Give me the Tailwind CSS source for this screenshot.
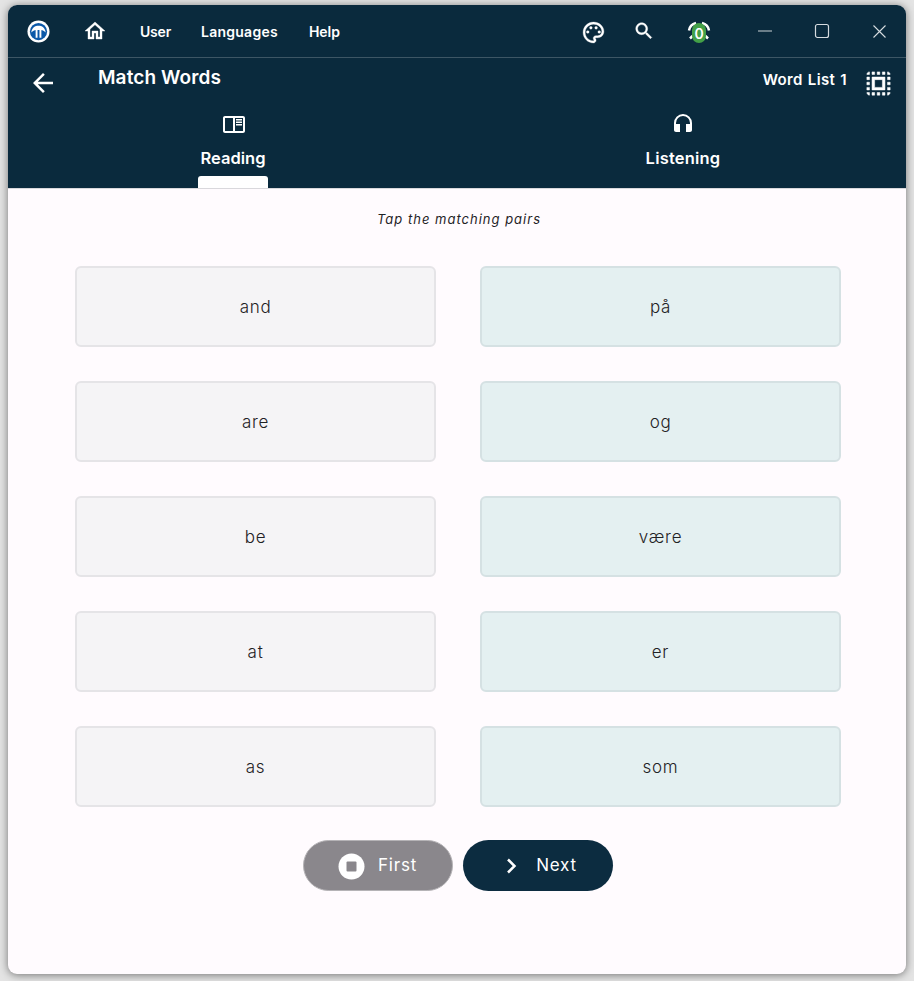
<!DOCTYPE html>
<html lang="en">
<head>
  <meta charset="UTF-8">
  <title>Match Words</title>
  <script src="https://cdn.jsdelivr.net/npm/@tailwindcss/browser@4"></script>
</head>
<body class="bg-[#e4e4e4] h-[981px] w-[914px] overflow-hidden font-['Inter','Liberation_Sans',sans-serif]">
  <div class="ml-[8px] mt-[5px] w-[898px] h-[969px] rounded-[9px] overflow-hidden flex flex-col bg-[#fffbfe] shadow-[0_1px_9px_rgba(0,0,0,0.5)]">

    <!-- title bar -->
    <div class="h-[53px] shrink-0 bg-[#0a2a3d] border-b border-[#3d5665] flex items-center text-white relative">
      <svg class="ml-[19px] w-[23px] h-[23px]" viewBox="0 0 24 24">
        <circle cx="12" cy="12" r="11.5" fill="#fff"/>
        <circle cx="12" cy="12" r="9" fill="#0b58a8"/>
        <path d="M4.500 13C5 8 8.500 6 12 6s7 2 7.500 7C17 10.500 15 10.500 12 10.500S7 10.500 4.500 13z" fill="#fff"/>
        <path d="M9 10.500h2v8H9zM13 10.500h2v8h-2z" fill="#fff"/>
      </svg>
      <svg class="ml-[33px] w-[24px] h-[24px]" viewBox="0 0 24 24" fill="#fff" stroke="#fff" stroke-width="0.4"><path d="M12 5.690l5 4.500V18h-2v-6H9v6H7v-7.810l5-4.500M12 3L2 12h3v8h6v-6h2v6h6v-8h3L12 3z"/></svg>
      <span class="ml-[33px] w-[30px] text-[14px] font-semibold tracking-[-0.2px]">User</span>
      <span class="ml-[31px] text-[14px] font-semibold tracking-[0.25px]">Languages</span>
      <span class="ml-[31px] text-[14px] font-semibold">Help</span>

      <svg class="absolute left-[573px] top-[15px] w-[25px] h-[25px]" viewBox="0 0 24 24" fill="#fff" stroke="#fff" stroke-width="0.3">
        <path d="M12 22C6.490 22 2 17.510 2 12S6.490 2 12 2s10 4.040 10 9c0 3.310-2.690 6-6 6h-1.770c-.28 0-.5.220-.5.500 0 .12.050.23.130.33.410.47.640 1.060.640 1.670 0 1.380-1.120 2.500-2.500 2.500zm0-18c-4.410 0-8 3.590-8 8s3.590 8 8 8c.28 0 .5-.22.5-.5 0-.16-.08-.28-.14-.35-.41-.46-.63-1.050-.63-1.650 0-1.380 1.120-2.500 2.500-2.500H16c2.210 0 4-1.790 4-4 0-3.860-3.590-7-8-7z"/>
        <circle cx="6.500" cy="11.500" r="1.300"/><circle cx="9.500" cy="7.500" r="1.300"/><circle cx="14.500" cy="7.500" r="1.300"/><circle cx="17.500" cy="11.500" r="1.300"/>
      </svg>
      <svg class="absolute left-[625px] top-[15px] w-[22px] h-[22px]" viewBox="0 0 24 24" fill="#fff" stroke="#fff" stroke-width="0.4"><path d="M15.500 14h-.79l-.28-.27C15.410 12.590 16 11.110 16 9.500 16 5.910 13.090 3 9.500 3S3 5.910 3 9.500 5.910 16 9.500 16c1.610 0 3.090-.59 4.230-1.570l.27.28v.79l5 4.990L20.490 19l-4.990-5zm-6 0C7.010 14 5 11.990 5 9.500S7.010 5 9.500 5 14 7.010 14 9.500 11.990 14 9.500 14z"/></svg>
      <div class="absolute left-[679px] top-[16px] w-[24px] h-[24px]">
        <svg class="w-[24px] h-[24px]" viewBox="0 0 24 24" fill="none" stroke="#fff" stroke-width="2.500"><path d="M2 9.500C2.500 6 5 3 9 2M22 9.500C21.500 6 19 3 15 2M3 17.500l2.500-2.500M21 17.500L18.500 15"/></svg>
        <span class="absolute left-[5px] top-[2px] w-[14px] h-[20px] rounded-full bg-[#43a047] flex items-center justify-center text-[14px] font-semibold">0</span>
      </div>

      <svg class="absolute left-[749px] top-[16px] w-[16px] h-[20px]" viewBox="0 0 16 20"><path d="M1 10h14" stroke="#c9d1d6" stroke-width="1.200"/></svg>
      <svg class="absolute left-[806px] top-[18px] w-[16px] h-[16px]" viewBox="0 0 16 16" fill="none"><rect x="1.500" y="1.500" width="13" height="13" rx="2" stroke="#d5dbdf" stroke-width="1.200"/></svg>
      <svg class="absolute left-[864px] top-[19px] w-[15px] h-[15px]" viewBox="0 0 15 15" fill="none"><path d="M1.500 1.500l12 12M13.500 1.500l-12 12" stroke="#d5dbdf" stroke-width="1.100"/></svg>
    </div>

    <!-- app bar with tabs -->
    <div class="h-[130px] shrink-0 bg-[#0a2a3d] text-white flex flex-col relative">
      <div class="h-[52px] flex items-start relative">
        <svg class="ml-[20px] mt-[10px] w-[30px] h-[30px]" viewBox="0 0 24 24" fill="#fff"><path d="M20 11H7.830l5.590-5.590L12 4l-8 8 8 8 1.410-1.410L7.830 13H20v-2z"/></svg>
        <span class="ml-[40px] mt-[7px] text-[19px] font-semibold leading-[25px] tracking-[0.1px]">Match Words</span>
        <span class="ml-auto mt-[12px] text-[15px] font-semibold leading-[20px] tracking-[0.35px] [word-spacing:1px]">Word List 1</span>
        <svg class="ml-[16px] mr-[12px] mt-[10px] w-[31px] h-[31px]" viewBox="0 0 24 24" fill="#fff" stroke="#fff" stroke-width="0.4"><path d="M3 5h2V3c-1.100 0-2 .9-2 2zm0 8h2v-2H3v2zm4 8h2v-2H7v2zM3 9h2V7H3v2zm10-6h-2v2h2V3zm6 0v2h2c0-1.100-.9-2-2-2zM5 21v-2H3c0 1.100.9 2 2 2zm-2-4h2v-2H3v2zM9 3H7v2h2V3zm2 18h2v-2h-2v2zm8-8h2v-2h-2v2zm0 8c1.100 0 2-.9 2-2h-2v2zm0-12h2V7h-2v2zm0 8h2v-2h-2v2zm-4 4h2v-2h-2v2zm0-16h2V3h-2v2zM7 17h10V7H7v10zm2-8h6v6H9V9z"/></svg>
      </div>
      <div class="grid grid-cols-2 flex-1">
        <div class="relative flex flex-col items-center">
          <svg class="w-[24px] h-[24px] mt-[2px] ml-[2px]" viewBox="0 0 24 24" fill="#fff"><path d="M21 4H3c-1.100 0-2 .9-2 2v13c0 1.100.9 2 2 2h18c1.100 0 2-.9 2-2V6c0-1.100-.9-2-2-2zM3 19V6h8v13H3zm18 0h-8V6h8v13zm-7-9.500h6V11h-6zm0-2.500h6v1.500h-6zm0 5h6v1.500h-6z"/></svg>
          <span class="mt-[11px] ml-[1px] text-[16.500px] font-semibold leading-[22px]">Reading</span>
          <span class="absolute bottom-0 left-[190px] w-[70px] h-[12px] bg-white rounded-t-[3px]"></span>
        </div>
        <div class="flex flex-col items-center">
          <svg class="w-[24px] h-[24px] mt-[1px] ml-[3px]" viewBox="0 0 24 24" fill="#fff"><path d="M12 3a9 9 0 0 0-9 9v7c0 1.100.9 2 2 2h4v-8H5v-1a7 7 0 0 1 14 0v1h-4v8h4c1.100 0 2-.9 2-2v-7a9 9 0 0 0-9-9z"/></svg>
          <span class="mt-[12px] ml-[3px] text-[16.500px] font-semibold leading-[22px] tracking-[0.2px]">Listening</span>
        </div>
      </div>
    </div>

    <!-- exercise -->
    <div class="flex-1 flex flex-col items-center border-t border-[#d9d8dc]">
      <p class="mt-[21px] ml-[4px] text-[13px] italic leading-[18px] tracking-[1px] text-[#1f2326]">Tap the matching pairs</p>
      <div class="mt-[38px] ml-[2px] grid grid-cols-[361px_361px] auto-rows-[81px] gap-x-[44px] gap-y-[34px] text-[17px] font-light tracking-[0.7px] text-[#1f2225]">
        <div class="pt-[2px] rounded-[6px] border-2 border-[#e5e4e7] bg-[#f5f4f6] flex items-center justify-center">and</div>
        <div class="pt-[2px] rounded-[6px] border-2 border-[#d5e1e3] bg-[#e4f0f1] flex items-center justify-center">på</div>
        <div class="pt-[2px] rounded-[6px] border-2 border-[#e5e4e7] bg-[#f5f4f6] flex items-center justify-center">are</div>
        <div class="pt-[2px] rounded-[6px] border-2 border-[#d5e1e3] bg-[#e4f0f1] flex items-center justify-center">og</div>
        <div class="pt-[2px] rounded-[6px] border-2 border-[#e5e4e7] bg-[#f5f4f6] flex items-center justify-center">be</div>
        <div class="pt-[2px] rounded-[6px] border-2 border-[#d5e1e3] bg-[#e4f0f1] flex items-center justify-center">være</div>
        <div class="pt-[2px] rounded-[6px] border-2 border-[#e5e4e7] bg-[#f5f4f6] flex items-center justify-center">at</div>
        <div class="pt-[2px] rounded-[6px] border-2 border-[#d5e1e3] bg-[#e4f0f1] flex items-center justify-center">er</div>
        <div class="pt-[2px] rounded-[6px] border-2 border-[#e5e4e7] bg-[#f5f4f6] flex items-center justify-center">as</div>
        <div class="pt-[2px] rounded-[6px] border-2 border-[#d5e1e3] bg-[#e4f0f1] flex items-center justify-center">som</div>
      </div>
      <div class="mt-[33px] ml-[2px] flex gap-[10px] text-white text-[17px] tracking-[0.8px]">
        <button class="w-[150px] h-[51px] pt-[1px] rounded-full bg-[#8a878c] border border-[#b5b3b6] flex items-center justify-center">
          <svg class="w-[27px] h-[27px] mr-[1px]" viewBox="0 0 27 27"><circle cx="13.500" cy="13.500" r="13" fill="#fff"/><rect x="8.500" y="8.500" width="10" height="10" rx="1" fill="#8a878c"/></svg>
          <span class="ml-[12px] mr-[1px]">First</span>
        </button>
        <button class="w-[150px] h-[51px] pt-[1px] rounded-full bg-[#0c2c40] flex items-center justify-center">
          <svg class="w-[24px] h-[24px]" viewBox="0 0 24 24" fill="none"><path d="M9 5.500L15.500 12 9 18.500" stroke="#fff" stroke-width="2.500"/></svg>
          <span class="ml-[13px]">Next</span>
        </button>
      </div>
    </div>
  </div>
</body>
</html>
